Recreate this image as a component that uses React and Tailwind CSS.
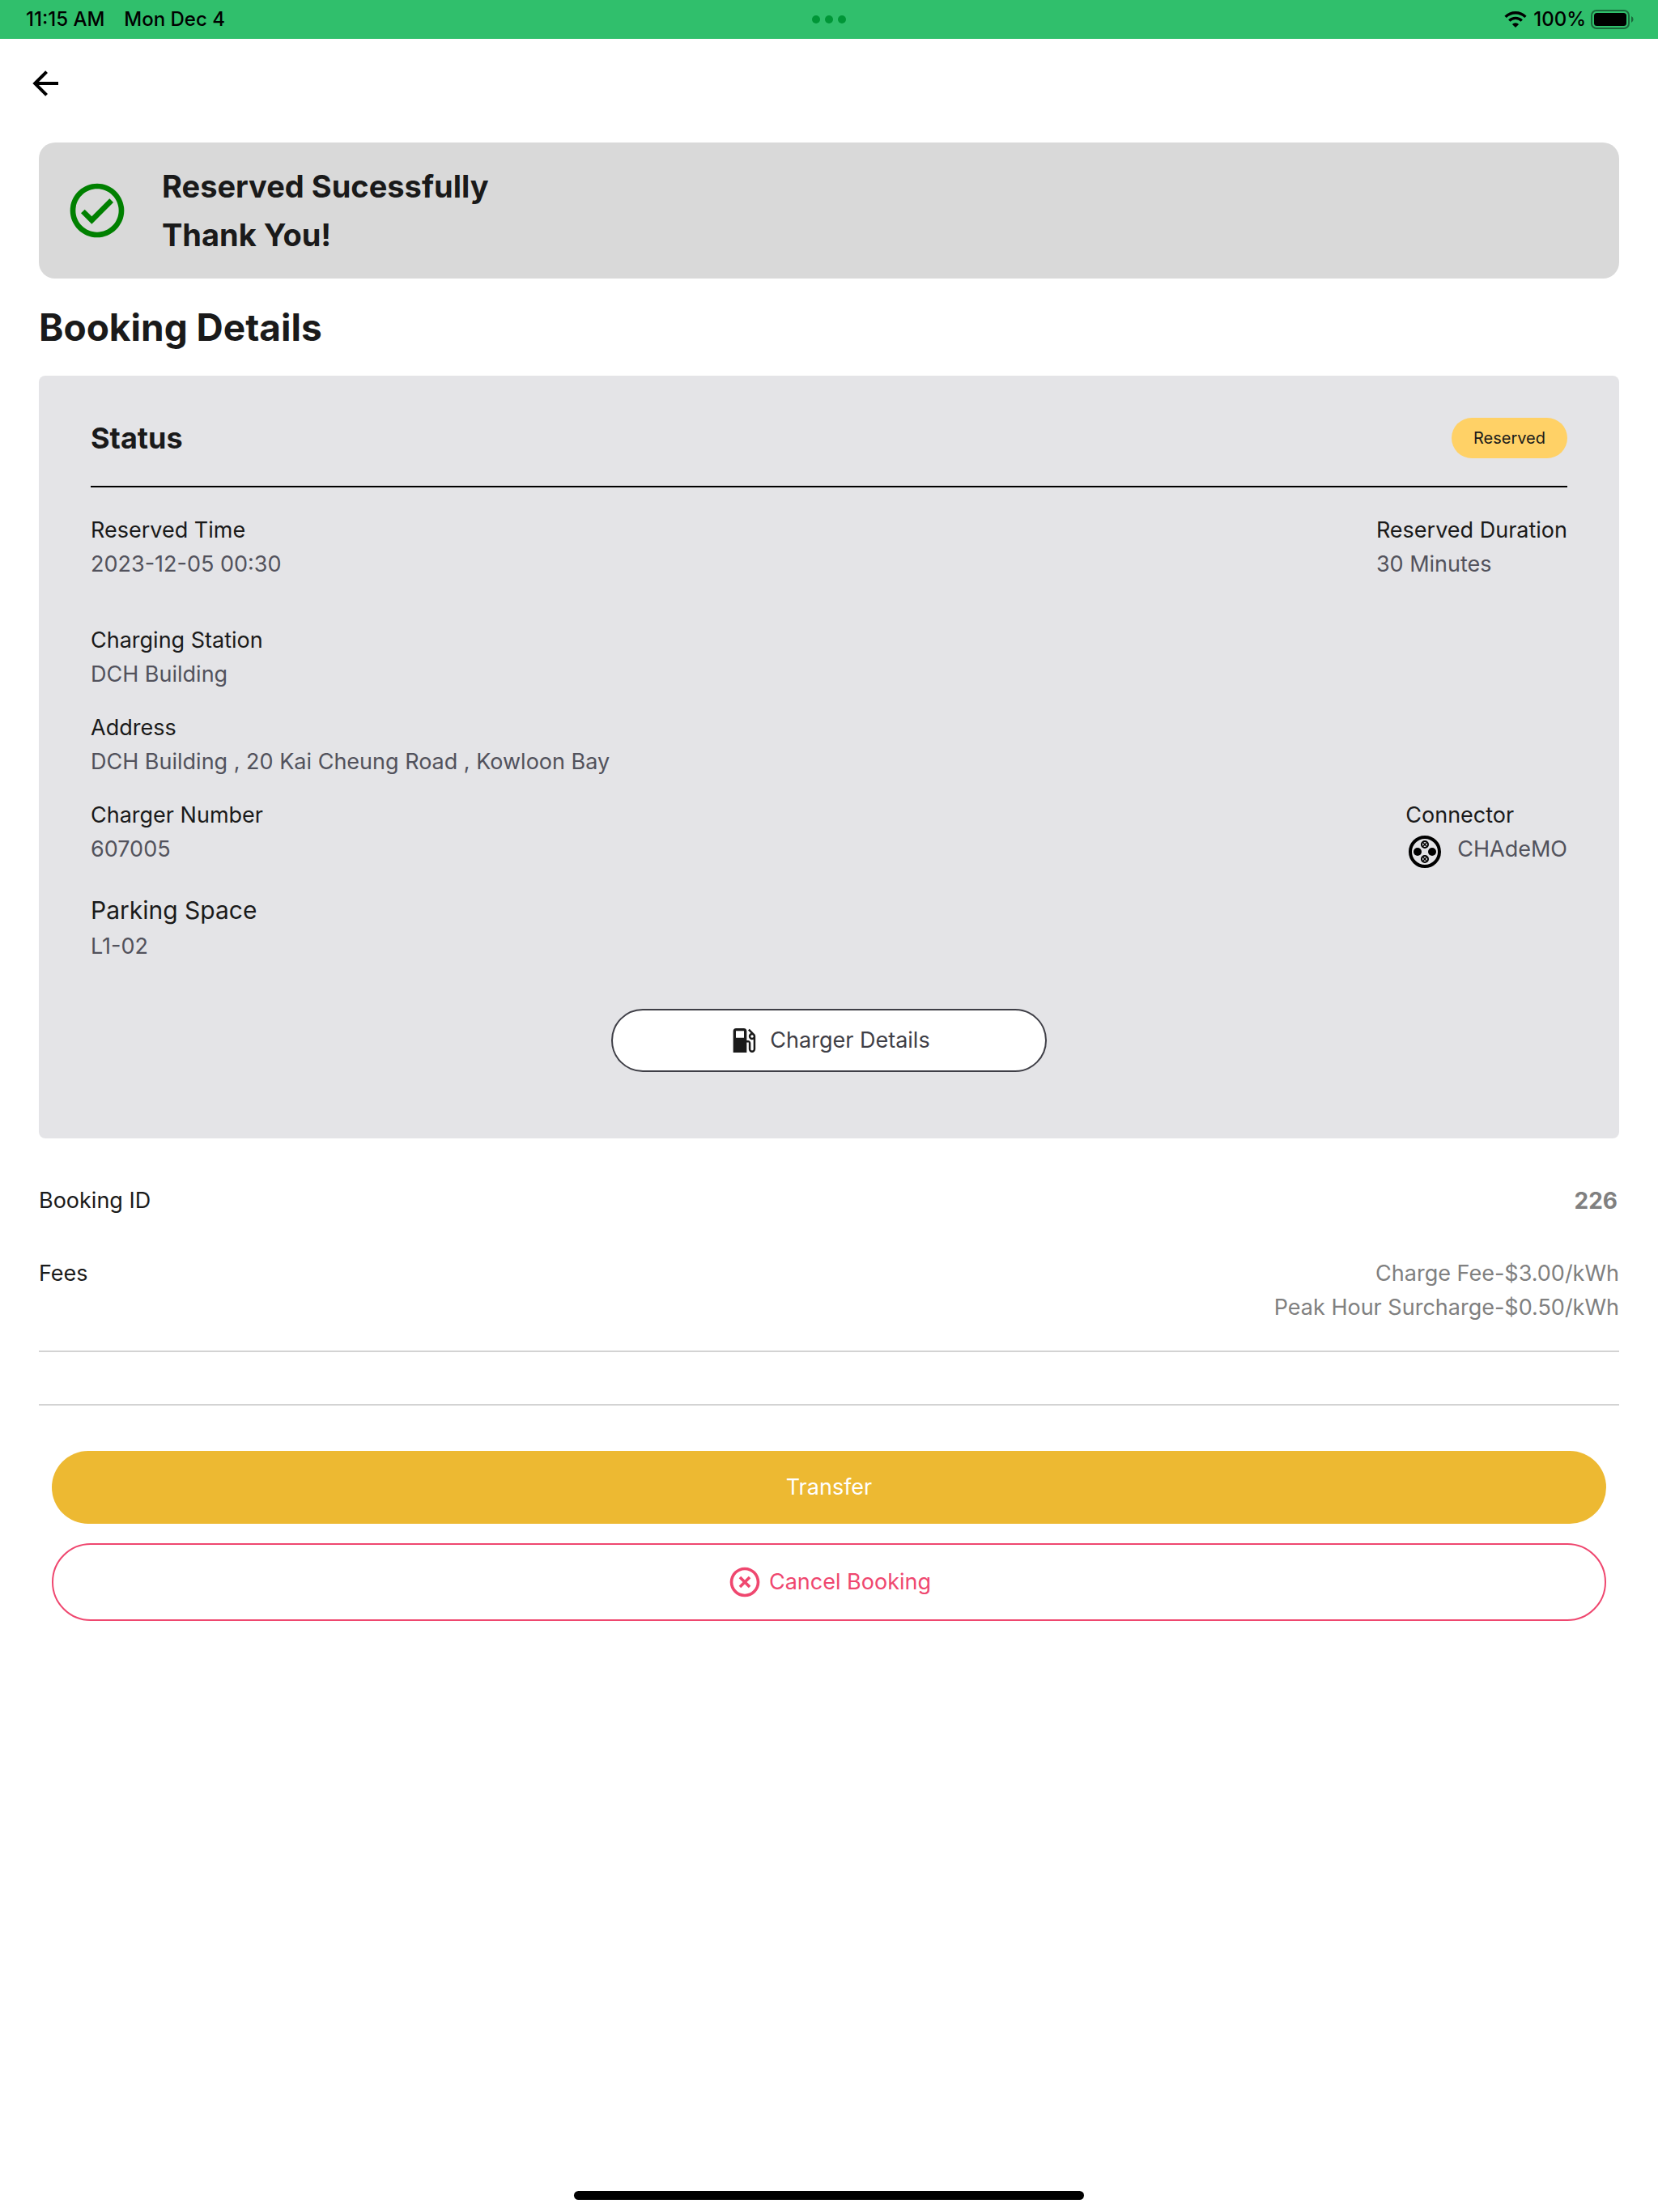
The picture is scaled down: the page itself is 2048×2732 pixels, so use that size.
import React from "react";
import { MdHighlightOff, MdLocalGasStation } from "react-icons/md";

function BackArrow() {
  return (
    <svg viewBox="0 0 24 24" className="size-12" fill="currentColor" aria-hidden="true">
      <path d="M20,11V13H8L13.5,18.5L12.08,19.92L4.16,12L12.08,4.08L13.5,5.5L8,11H20Z" />
    </svg>
  );
}

function CheckCircle() {
  return (
    <svg viewBox="0 0 24 24" className="size-20 text-[#008000]" fill="currentColor" aria-hidden="true">
      <path d="M12 2C6.5 2 2 6.5 2 12S6.5 22 12 22 22 17.5 22 12 17.5 2 12 2M12 20C7.59 20 4 16.41 4 12S7.59 4 12 4 20 7.59 20 12 16.41 20 12 20M16.59 7.58L10 14.17L7.41 11.59L6 13L10 17L18 9L16.59 7.58Z" />
    </svg>
  );
}

function WifiIcon() {
  return (
    <svg viewBox="0 0 28 20" className="mr-0.5 h-5 w-7" fill="none" aria-hidden="true">
      <path d="M1.6 6.9 A17.6 17.6 0 0 1 26.4 6.9" stroke="#000" strokeWidth="3.4" />
      <path d="M6.3 11.6 A10.9 10.9 0 0 1 21.7 11.6" stroke="#000" strokeWidth="3.4" />
      <path d="M14 20 L9.9 15.9 A5.8 5.8 0 0 1 18.1 15.9 Z" fill="#000" />
    </svg>
  );
}

function BatteryIcon() {
  return (
    <svg viewBox="0 0 54 24" className="h-6 w-[54px]" fill="none" aria-hidden="true">
      <rect x="1" y="1" width="46" height="22" rx="6" stroke="#000" strokeOpacity="0.45" strokeWidth="2" />
      <rect x="4" y="4" width="40" height="16" rx="3.5" fill="#000" />
      <path d="M50 8 A4.4 4.4 0 0 1 50 16 Z" fill="#000" fillOpacity="0.45" />
    </svg>
  );
}

function SmallPin({ cy }) {
  return (
    <g>
      <circle cx="20" cy={cy} r="4" stroke="#000" strokeWidth="2" />
      <path
        d={`M17.6 ${cy - 2.4} L22.4 ${cy + 2.4} M22.4 ${cy - 2.4} L17.6 ${cy + 2.4}`}
        stroke="#000"
        strokeWidth="1.4"
      />
    </g>
  );
}

function ChademoIcon() {
  return (
    <svg viewBox="0 0 40 40" className="mt-1 size-10" fill="none" aria-hidden="true">
      <circle cx="20" cy="20" r="18" stroke="#000" strokeWidth="4" />
      <circle cx="11" cy="20" r="5" fill="#000" />
      <circle cx="29" cy="20" r="5" fill="#000" />
      <SmallPin cy={11} />
      <SmallPin cy={29} />
    </svg>
  );
}

function Field({ label, value }) {
  return (
    <div>
      <div>{label}</div>
      <div className="text-zinc-600">{value}</div>
    </div>
  );
}

export default function App() {
  return (
    <div className="flex min-h-screen flex-col bg-white font-['Inter',sans-serif] text-[27px] leading-[42px] text-[#1a1a1a]">
      <div className="grid h-12 grid-cols-3 items-center bg-[#30bf6c] text-2xl font-medium text-black">
        <div className="flex gap-6 pl-8">
          <span>11:15 AM</span>
          <span>Mon Dec 4</span>
        </div>
        <div className="flex justify-center gap-1.5">
          <span className="size-2.5 rounded-full bg-[#009637]" />
          <span className="size-2.5 rounded-full bg-[#009637]" />
          <span className="size-2.5 rounded-full bg-[#009637]" />
        </div>
        <div className="flex items-center justify-end gap-1.5 pr-[29px]">
          <WifiIcon />
          <span>100%</span>
          <BatteryIcon />
        </div>
      </div>

      <header className="flex h-[110px] items-center px-8 text-black">
        <button type="button" aria-label="Back">
          <BackArrow />
        </button>
      </header>

      <main className="px-12 pt-[18px]">
        <section className="flex items-center gap-10 rounded-[20px] bg-[#d9d9d9] px-8 py-6">
          <CheckCircle />
          <div className="text-[38px] leading-[60px] font-bold">
            <p>Reserved Sucessfully</p>
            <p>Thank You!</p>
          </div>
        </section>

        <h1 className="my-6 text-[46px] leading-[72px] font-bold">Booking Details</h1>

        <section className="rounded-lg bg-zinc-200 px-16 pt-[52px] pb-[82px]">
          <div className="flex items-center justify-between border-b-2 border-black pb-[34px]">
            <h2 className="text-4xl leading-[50px] font-bold">Status</h2>
            <span className="rounded-full bg-[#ffd166] px-[27px] text-xl leading-[50px]">Reserved</span>
          </div>

          <div className="mt-8 flex justify-between">
            <Field label="Reserved Time" value="2023-12-05 00:30" />
            <Field label="Reserved Duration" value="30 Minutes" />
          </div>

          <div className="mt-[52px] flex flex-col gap-6">
            <Field label="Charging Station" value="DCH Building" />
            <Field label="Address" value="DCH Building , 20 Kai Cheung Road , Kowloon Bay" />
            <div className="flex justify-between">
              <Field label="Charger Number" value="607005" />
              <div>
                <div>Connector</div>
                <div className="flex items-start gap-5 pl-1 text-zinc-600">
                  <ChademoIcon />
                  <span>CHAdeMO</span>
                </div>
              </div>
            </div>
          </div>

          <div className="mt-7">
            <div className="text-[30px] leading-[48px]">Parking Space</div>
            <div className="text-zinc-600">L1-02</div>
          </div>

          <button
            type="button"
            className="mx-auto mt-14 flex h-[78px] w-[538px] items-center justify-center gap-3 rounded-full border-2 border-zinc-700 bg-white text-zinc-700"
          >
            <MdLocalGasStation className="size-10 text-[#1a1a1a]" aria-hidden="true" />
            Charger Details
          </button>
        </section>

        <div className="mt-14 flex justify-between">
          <span>Booking ID</span>
          <span className="pr-0.5 text-[28px] font-bold text-[#808080]">226</span>
        </div>
        <div className="mt-12 flex justify-between border-b-2 border-[#d3d3d3] pb-8">
          <span>Fees</span>
          <div className="text-right text-[#808080]">
            <p>Charge Fee-$3.00/kWh</p>
            <p>Peak Hour Surcharge-$0.50/kWh</p>
          </div>
        </div>
        <hr className="mt-16 border-t-2 border-[#d3d3d3]" />

        <div className="mt-14 flex flex-col gap-6 px-4">
          <button type="button" className="h-[90px] rounded-full bg-[#edb932] text-white">
            Transfer
          </button>
          <button
            type="button"
            className="flex h-24 items-center justify-center gap-2 rounded-full border-2 border-[#ef476f] text-[#ef476f]"
          >
            <MdHighlightOff className="size-11" aria-hidden="true" />
            Cancel Booking
          </button>
        </div>
      </main>

      <div className="mx-auto mt-auto mb-[15px] h-[11px] w-[630px] rounded-full bg-black" />
    </div>
  );
}
